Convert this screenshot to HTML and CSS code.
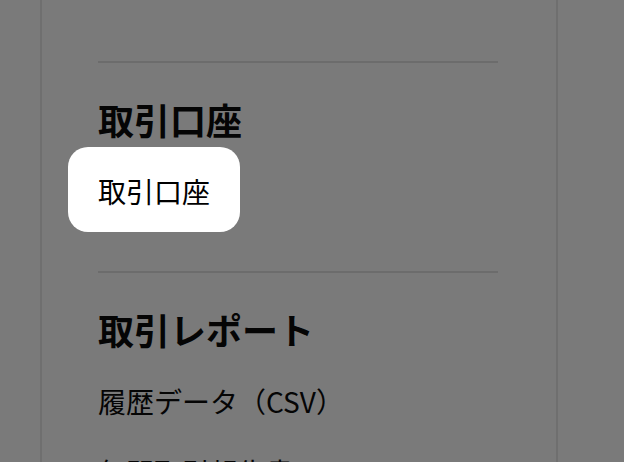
FILE: index.html
```html
<!DOCTYPE html>
<html lang="ja">
<head>
<meta charset="utf-8">
<title>メニュー</title>
<link rel="stylesheet" href="styles.css">
</head>
<body>
<div class="panel">
  <section class="section">
    <h2 class="section-title">取引口座</h2>
    <ul class="items">
      <li class="item is-active">取引口座</li>
    </ul>
  </section>
  <section class="section">
    <h2 class="section-title">取引レポート</h2>
    <ul class="items">
      <li class="item">履歴データ（CSV）</li>
      <li class="item">年間取引報告書</li>
      <li class="item">取引残高報告書</li>
    </ul>
  </section>
</div>
</body>
</html>
```

FILE: styles.css
```css
html, body {
  margin: 0;
  padding: 0;
}
body {
  background: #7a7a7a;
  font-family: "Noto Sans CJK JP", "Noto Sans", sans-serif;
  color: #050505;
  overflow: hidden;
  height: 462px;
}
.panel {
  box-sizing: border-box;
  width: 518px;
  margin-left: 40px;
  padding: 61px 58px 0 56px;
  border-left: 2px solid #6f6f6f;
  border-right: 2px solid #6f6f6f;
  min-height: 462px;
}
.section {
  border-top: 2px solid #6c6c6c;
  padding: 31px 0 48px;
}
.section-title {
  margin: 0;
  font-size: 36px;
  line-height: 50px;
  font-weight: 700;
}
.items {
  list-style: none;
  margin: 12px 0 0;
  padding: 0;
  display: flex;
  flex-direction: column;
  gap: 4px;
}
.item {
  display: flex;
  align-items: center;
  box-sizing: border-box;
  width: max-content;
  height: 67px;
  margin-left: -30px;
  padding: 3px 30px 0;
  font-size: 28px;
  border-radius: 20px;
}
.item.is-active {
  height: 85px;
  margin-top: -9px;
  margin-bottom: -9px;
  background: #ffffff;
  color: #000000;
}
```
